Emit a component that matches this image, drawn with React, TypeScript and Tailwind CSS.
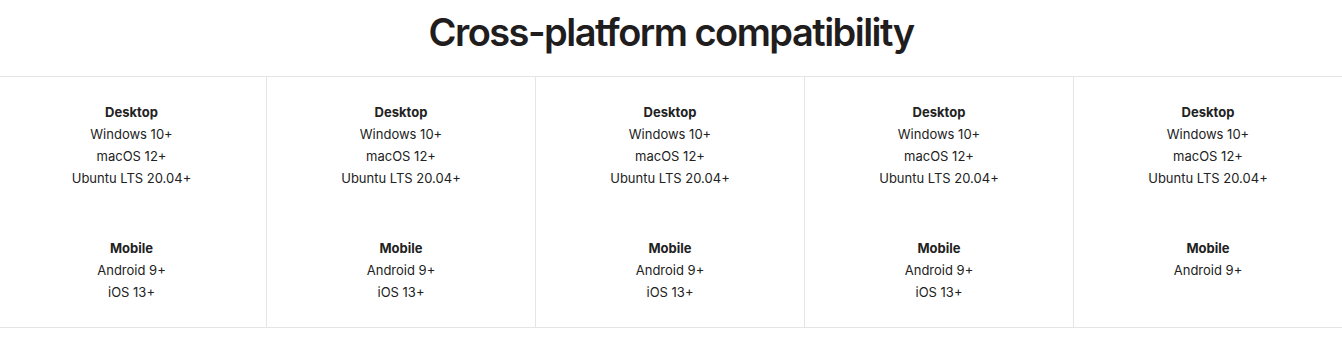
import React from "react";

type Platform = {
    desktop: string[];
    mobile: string[];
};

const platforms: Platform[] = [
    { desktop: ["Windows 10+", "macOS 12+", "Ubuntu LTS 20.04+"], mobile: ["Android 9+", "iOS 13+"] },
    { desktop: ["Windows 10+", "macOS 12+", "Ubuntu LTS 20.04+"], mobile: ["Android 9+", "iOS 13+"] },
    { desktop: ["Windows 10+", "macOS 12+", "Ubuntu LTS 20.04+"], mobile: ["Android 9+", "iOS 13+"] },
    { desktop: ["Windows 10+", "macOS 12+", "Ubuntu LTS 20.04+"], mobile: ["Android 9+", "iOS 13+"] },
    { desktop: ["Windows 10+", "macOS 12+", "Ubuntu LTS 20.04+"], mobile: ["Android 9+"] },
];

const Group = ({ title, items }: { title: string; items: string[] }) => (
    <div className="flex flex-col items-center">
        <h3 className="font-bold">{title}</h3>
        {items.map((item) => (
            <p key={item}>{item}</p>
        ))}
    </div>
);

const App = () => {
    return (
        <div
            className="bg-white text-[#222] w-full h-[343px] overflow-hidden"
            style={{ fontFamily: "Inter, 'Noto Sans', sans-serif" }}
        >
            <h2 className="pt-2 pb-5 text-center text-[38px] leading-[48px] font-semibold tracking-[-0.04em] text-[#1f1d1d]">
                Cross-platform compatibility
            </h2>
            <div className="border-y border-[#e5e5e5]">
                <div className="grid grid-cols-5 w-[1345px] -ml-[3px]">
                    {platforms.map((p, i) => (
                        <div
                            key={i}
                            className={
                                "flex flex-col gap-12 pt-6 pb-6 text-[13px] leading-[22px] " +
                                (i > 0 ? "border-l border-[#e5e5e5]" : "")
                            }
                        >
                            <Group title="Desktop" items={p.desktop} />
                            <Group title="Mobile" items={p.mobile} />
                        </div>
                    ))}
                </div>
            </div>
        </div>
    );
};

export default App;
